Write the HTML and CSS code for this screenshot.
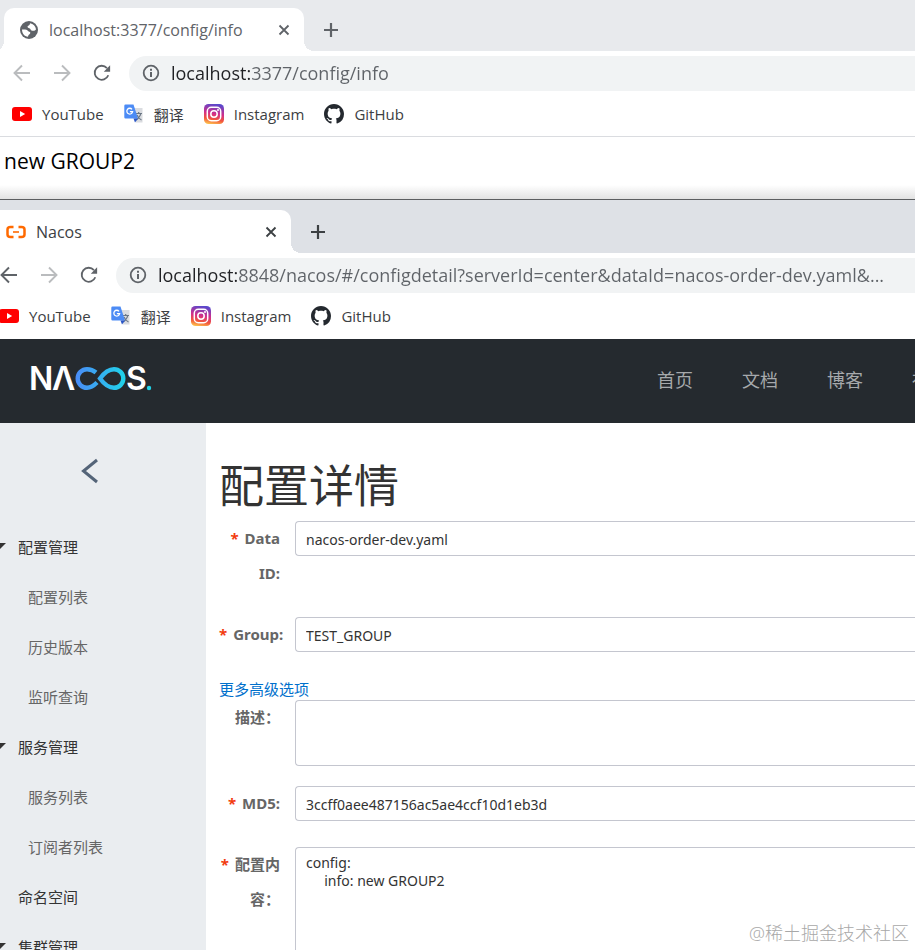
FILE: index.html
```
<!DOCTYPE html>
<html lang="zh-CN">
<head>
  <meta charset="UTF-8" />
  <meta name="viewport" content="width=device-width, initial-scale=1.0"/>
  <title>Nacos</title>
  <link rel="stylesheet" href="styles.css">
</head>
<body>
  <!-- 公用图标 -->
  <svg class="sprite" aria-hidden="true">
    <defs>
      <linearGradient id="igBlue" x1="0.5" y1="0" x2="0.3" y2="1">
        <stop offset="0" stop-color="#5a48cc"/>
        <stop offset="0.45" stop-color="#d02e8c"/>
        <stop offset="0.75" stop-color="#f2553c"/>
        <stop offset="1" stop-color="#fdc04d"/>
      </linearGradient>
    </defs>
    <symbol id="close" viewBox="0 0 12 12">
      <path d="M1.5 1.5l9 9M10.5 1.5l-9 9" fill="none" stroke="currentColor" stroke-width="1.8"/>
    </symbol>
    <symbol id="plus" viewBox="0 0 16 16">
      <path d="M8 1v14M1 8h14" fill="none" stroke="currentColor" stroke-width="2.2"/>
    </symbol>
    <symbol id="back" viewBox="0 0 18 18">
      <path d="M17 9H2M9 1.5L1.5 9 9 16.5" fill="none" stroke="currentColor" stroke-width="1.9"/>
    </symbol>
    <symbol id="forward" viewBox="0 0 18 18">
      <path d="M1 9h15M9 1.5L16.5 9 9 16.5" fill="none" stroke="currentColor" stroke-width="1.9"/>
    </symbol>
    <symbol id="reload" viewBox="0 0 20 20">
      <path d="M17 12.500A7.800 7.800 0 1 1 15.500 4.500" fill="none" stroke="currentColor" stroke-width="2"/>
      <path d="M19 1.500v7h-7z" fill="currentColor"/>
    </symbol>
    <symbol id="info" viewBox="0 0 18 18">
      <circle cx="9" cy="9" r="7.3" fill="none" stroke="currentColor" stroke-width="1.8"/>
      <path d="M9 8v5M9 4.8v2" stroke="currentColor" stroke-width="2"/>
    </symbol>
    <symbol id="youtube" viewBox="0 0 20 20">
      <rect x="0" y="3" width="20" height="14" rx="3" fill="#f00"/>
      <path d="M8 7l5.200 3L8 13z" fill="#fff"/>
    </symbol>
    <symbol id="translate" viewBox="0 0 20 20">
      <path d="M8 4h10.500v14.500H12z" fill="#dadce0"/>
      <path d="M11.500 9.500h6.500M14.700 8v1.500M16.800 9.500c-.5 3-2.500 5-4.500 6.500M13 11c1 2.500 2.500 4 4.500 5" fill="none" stroke="#6b7785" stroke-width="1.2"/>
      <path d="M1.500 0.500h8l4.500 14H1.500a1.200 1.200 0 0 1-1.200-1.200V1.700a1.200 1.200 0 0 1 1.200-1.200z" fill="#4c8bf5"/>
      <path d="M9.500 14.500H14l-3 4z" fill="#2a56c6"/>
      <path d="M8 5.300A2.900 2.900 0 1 0 8.600 7.700H5.900" fill="none" stroke="#fff" stroke-width="1.3"/>
    </symbol>
    <symbol id="instagram" viewBox="0 0 20 20">
      <rect width="20" height="20" rx="4.5" fill="url(#igBlue)"/>
      <rect x="3.3" y="3.3" width="13.4" height="13.4" rx="4" fill="none" stroke="#fff" stroke-width="1.5"/>
      <circle cx="10" cy="10" r="3.2" fill="none" stroke="#fff" stroke-width="1.5"/>
      <circle cx="14" cy="6" r="1" fill="#fff"/>
    </symbol>
    <symbol id="github" viewBox="0 0 16 16">
      <path fill="#24292f" d="M8 0C3.580 0 0 3.580 0 8c0 3.540 2.290 6.530 5.470 7.590.4.070.55-.17.55-.38 0-.19-.01-.82-.01-1.490-2.010.37-2.530-.49-2.690-.94-.09-.23-.48-.94-.82-1.130-.28-.15-.68-.52-.01-.53.63-.01 1.080.58 1.230.82.72 1.210 1.870.87 2.330.66.07-.52.28-.87.51-1.070-1.780-.2-3.640-.89-3.640-3.950 0-.87.31-1.590.82-2.150-.08-.2-.36-1.020.08-2.120 0 0 .67-.21 2.200.82.64-.18 1.320-.27 2-.27s1.360.09 2 .27c1.530-1.040 2.200-.82 2.200-.82.44 1.100.16 1.920.08 2.120.51.56.82 1.270.82 2.150 0 3.070-1.870 3.750-3.650 3.950.29.25.54.73.54 1.480 0 1.070-.01 1.930-.01 2.200 0 .21.15.46.55.38A8.010 8.010 0 0 0 16 8c0-4.420-3.580-8-8-8z"/>
    </symbol>
  </svg>

  <!-- 后面的浏览器窗口 -->
  <section class="window window-back">
    <div class="tab-strip">
      <div class="tab">
        <svg class="favicon" viewBox="0 0 18 18">
          <circle cx="9" cy="9" r="9" fill="#5f6368"/>
          <path d="M2 8.500c2.500-.3 5 0 5.500 1 .8 1.500 2.800.8 2.800 2.200 0 1.600-2 1.400-2.300 4.100C4.500 15.500 2 12.500 2 8.500zM10 2.200c3.300.5 5.500 2.800 6 6-.8 1.800-3 2-4.500 1.300-1.200-.6-.7-1.800-2.200-2.200-2-.5-2.300-1.800-1-2.500C9.500 4.200 10 3.500 10 2.200z" fill="#fff"/>
        </svg>
        <span class="tab-title">localhost:3377/config/info</span>
        <button class="tab-close" aria-label="关闭"><svg><use href="#close"/></svg></button>
      </div>
      <button class="new-tab" aria-label="新标签页"><svg><use href="#plus"/></svg></button>
    </div>
    <div class="toolbar">
      <button class="nav-btn disabled" aria-label="后退"><svg><use href="#back"/></svg></button>
      <button class="nav-btn disabled" aria-label="前进"><svg><use href="#forward"/></svg></button>
      <button class="nav-btn" aria-label="重新加载"><svg><use href="#reload"/></svg></button>
      <div class="omnibox">
        <svg><use href="#info"/></svg>
        <input type="text" aria-label="地址" value="localhost:3377/config/info">
      </div>
    </div>
    <nav class="bookmarks">
      <a href="#"><svg><use href="#youtube"/></svg>YouTube</a>
      <a href="#"><svg><use href="#translate"/></svg>翻译</a>
      <a href="#"><svg><use href="#instagram"/></svg>Instagram</a>
      <a href="#"><svg><use href="#github"/></svg>GitHub</a>
    </nav>
    <div class="plain-page">new GROUP2</div>
  </section>

  <!-- 前面的浏览器窗口 -->
  <section class="window window-front">
    <div class="chrome">
      <div class="tab-strip">
        <div class="tab">
          <svg class="favicon" viewBox="0 0 20 18">
            <path d="M7.500 4H4.500C2.500 4 1.500 5 1.500 6.500v5C1.500 13 2.500 14 4.500 14h3M12.500 4h3c2 0 3 1 3 2.500v5c0 1.500-1 2.500-3 2.500h-3" fill="none" stroke="#ff6a00" stroke-width="2.5"/>
            <path d="M7 9h6" stroke="#ff6a00" stroke-width="1.6"/>
          </svg>
          <span class="tab-title">Nacos</span>
          <button class="tab-close" aria-label="关闭"><svg><use href="#close"/></svg></button>
        </div>
        <button class="new-tab" aria-label="新标签页"><svg><use href="#plus"/></svg></button>
      </div>
      <div class="toolbar">
        <button class="nav-btn" aria-label="后退"><svg><use href="#back"/></svg></button>
        <button class="nav-btn disabled" aria-label="前进"><svg><use href="#forward"/></svg></button>
        <button class="nav-btn" aria-label="重新加载"><svg><use href="#reload"/></svg></button>
        <div class="omnibox">
          <svg><use href="#info"/></svg>
          <input type="text" aria-label="地址" value="localhost:8848/nacos/#/configdetail?serverId=center&amp;dataId=nacos-order-dev.yaml&amp;...">
        </div>
      </div>
      <nav class="bookmarks">
        <a href="#"><svg><use href="#youtube"/></svg>YouTube</a>
        <a href="#"><svg><use href="#translate"/></svg>翻译</a>
        <a href="#"><svg><use href="#instagram"/></svg>Instagram</a>
        <a href="#"><svg><use href="#github"/></svg>GitHub</a>
      </nav>
    </div>

    <header class="header">
      <a href="#" class="logo" aria-label="Nacos">
        <svg viewBox="0 0 124 48">
          <defs>
            <linearGradient id="loop" gradientUnits="userSpaceOnUse" x1="46" y1="0" x2="96" y2="0">
              <stop offset="0" stop-color="#4a8cf7"/>
              <stop offset="1" stop-color="#1fd5ea"/>
            </linearGradient>
          </defs>
          <text x="-1" y="35" class="logo-text">N</text>
          <text x="22" y="35" class="logo-text">Λ</text>
          <path d="M66 17.500C63 15 60.500 14.200 57 14.200A9.300 9.300 0 0 0 57 32.800C61 32.800 64 30.500 67 27.500" fill="none" stroke="url(#loop)" stroke-width="4.4"/>
          <path d="M70 23.500C74 18 78 14.200 84 14.200A9.300 9.300 0 0 1 84 32.800C78 32.800 74 29 70 23.500z" fill="none" stroke="url(#loop)" stroke-width="4.4"/>
          <text x="96" y="35" class="logo-text">S</text>
          <circle cx="119" cy="33" r="2.2" fill="#1fd5ea"/>
        </svg>
      </a>
      <nav class="site-nav">
        <a href="#">首页</a>
        <a href="#">文档</a>
        <a href="#">博客</a>
        <a href="#">社区</a>
      </nav>
    </header>

    <div class="body">
      <aside class="sidebar">
        <button class="back-btn" aria-label="返回">
          <svg viewBox="0 0 18 26"><path d="M16 2L2.500 13 16 24" fill="none" stroke="#546478" stroke-width="3"/></svg>
        </button>
        <ul class="menu">
          <li class="group open"><a href="#">配置管理</a></li>
          <li><a href="#">配置列表</a></li>
          <li><a href="#">历史版本</a></li>
          <li><a href="#">监听查询</a></li>
          <li class="group open"><a href="#">服务管理</a></li>
          <li><a href="#">服务列表</a></li>
          <li><a href="#">订阅者列表</a></li>
          <li class="group"><a href="#">命名空间</a></li>
          <li class="group open"><a href="#">集群管理</a></li>
        </ul>
      </aside>

      <main class="main">
        <h1>配置详情</h1>
        <form>
          <div class="row">
            <label for="dataId" class="required">Data ID:</label>
            <input type="text" id="dataId" value="nacos-order-dev.yaml">
          </div>
          <div class="row">
            <label for="group" class="required">Group:</label>
            <input type="text" id="group" value="TEST_GROUP">
          </div>
          <a href="#" class="more">更多高级选项</a>
          <div class="row desc">
            <label for="desc">描述：</label>
            <textarea id="desc"></textarea>
          </div>
          <div class="row">
            <label for="md5" class="required">MD5:</label>
            <input type="text" id="md5" value="3ccff0aee487156ac5ae4ccf10d1eb3d">
          </div>
          <div class="row">
            <label for="content" class="required">配置内容：</label>
            <textarea id="content" class="content">config:
     info: new GROUP2</textarea>
          </div>
        </form>
      </main>
    </div>
  </section>

  <div class="watermark">@稀土掘金技术社区</div>
</body>
</html>
```

FILE: styles.css
```
* {
  box-sizing: border-box;
}

body {
  margin: 0;
  height: 100vh;
  overflow: hidden;
  position: relative;
  display: flex;
  flex-direction: column;
  font-family: "Open Sans", "Noto Sans CJK SC", sans-serif;
  background: #fff;
  color: #333;
}

a {
  color: inherit;
  text-decoration: none;
}

button {
  display: flex;
  align-items: center;
  justify-content: center;
  padding: 0;
  border: none;
  background: none;
  color: inherit;
  cursor: pointer;
}

.sprite {
  position: absolute;
  width: 0;
  height: 0;
}

/* 浏览器外框 */
.tab-strip {
  display: flex;
  align-items: flex-end;
  height: 51px;
  padding-left: 4px;
  background: #e8eaed;
}

.tab {
  position: relative;
  display: flex;
  align-items: center;
  width: 300px;
  height: 43px;
  padding: 0 14px 0 16px;
  border-radius: 10px 10px 0 0;
  background: #fff;
  color: #5f6368;
}

/* 标签页底部的圆角 */
.tab::before,
.tab::after {
  content: "";
  position: absolute;
  bottom: 0;
  width: 10px;
  height: 10px;
}

.tab::before {
  right: 100%;
  background: radial-gradient(circle at 0 0, transparent 10px, #fff 10px);
}

.tab::after {
  left: 100%;
  background: radial-gradient(circle at 100% 0, transparent 10px, #fff 10px);
}

.favicon {
  width: 18px;
  height: 18px;
}

.tab-title {
  flex: 1;
  margin-left: 11px;
  font-size: 16px;
}

.tab-close svg {
  width: 12px;
  height: 12px;
}

.new-tab {
  width: 54px;
  height: 43px;
  color: #5f6368;
}

.new-tab svg {
  width: 16px;
  height: 16px;
}

.toolbar {
  display: flex;
  align-items: center;
  height: 44px;
  padding-left: 12px;
  background: #fff;
}

.nav-btn {
  width: 20px;
  height: 36px;
  margin-right: 20px;
  color: #5f6368;
}

.nav-btn svg {
  width: 18px;
  height: 18px;
}

.nav-btn.disabled {
  color: #babcbe;
}

.omnibox {
  display: flex;
  flex: 1;
  align-items: center;
  height: 35px;
  margin-left: -3px;
  padding-left: 13px;
  border-radius: 18px 0 0 18px;
  background: #f1f3f4;
  color: #5f6368;
}

.omnibox svg {
  width: 18px;
  height: 18px;
}

/* 主机名深色，其余灰色 */
.omnibox input {
  flex: 1;
  min-width: 0;
  margin-left: 11px;
  padding: 0;
  border: none;
  outline: none;
  font-family: inherit;
  font-size: 18px;
  background: linear-gradient(90deg, #202124 80px, #5f6368 80px);
  -webkit-background-clip: text;
  background-clip: text;
  color: transparent;
}

.bookmarks {
  display: flex;
  align-items: center;
  gap: 20px;
  height: 41px;
  padding: 0 12px 3px;
  background: #fff;
  color: #3c4043;
  font-size: 15px;
}

.bookmarks a {
  display: flex;
  align-items: center;
  gap: 10px;
}

.bookmarks svg {
  width: 20px;
  height: 20px;
}

.plain-page {
  height: 63px;
  padding: 8px 4px;
  border-top: 1px solid #dadce0;
  background: linear-gradient(#fff 48px, #e2e2e2);
  color: #000;
  font-size: 21px;
  line-height: 32px;
}

.window-front {
  flex: 1;
  min-height: 0;
  display: flex;
  flex-direction: column;
  border-top: 1px solid #5c5e60;
  overflow: hidden;
}

/* 前窗口左边缘超出屏幕 */
.chrome {
  margin-left: -13px;
}

.window-front .tab-strip {
  height: 53px;
  background: #dee1e6;
}

.window-front .tab,
.window-front .new-tab {
  color: #3c4043;
}

.window-front .tab {
  padding-left: 15px;
}

.window-front .favicon {
  width: 20px;
}

.window-front .tab-title {
  margin-left: 10px;
}

.window-front .bookmarks {
  height: 42px;
  padding-bottom: 4px;
}

/* Nacos 顶栏 */
.header {
  display: flex;
  flex: none;
  align-items: center;
  justify-content: space-between;
  height: 84px;
  padding: 0 0 4px 30px;
  background: #252a2f;
}

.logo svg {
  display: block;
  width: 124px;
  height: 48px;
  overflow: visible;
}

.logo-text {
  font-family: Inter, sans-serif;
  font-size: 32px;
  font-weight: 600;
  fill: #fff;
}

.site-nav {
  display: flex;
  gap: 49px;
  margin-right: -33px;
  color: #a6a9ac;
  font-size: 18px;
}

.body {
  display: flex;
  flex: 1;
  min-height: 0;
}

/* 左侧菜单 */
.sidebar {
  flex: none;
  width: 206px;
  background: #eaedf0;
}

.back-btn {
  width: 180px;
  height: 96px;
}

.back-btn svg {
  width: 18px;
  height: 26px;
}

.menu {
  margin: 3px 0 0;
  padding: 0;
  list-style: none;
  font-size: 15px;
}

.menu li {
  height: 50px;
  padding-left: 28px;
  line-height: 50px;
  color: #666;
}

.menu .group {
  display: flex;
  align-items: center;
  padding-left: 18px;
  color: #333;
}

.menu .open {
  padding-left: 0;
}

.menu .open::before {
  content: "";
  width: 18px;
  height: 6px;
  margin-bottom: 2px;
  background: #333;
  clip-path: polygon(0 0, 6px 0, 0 6px);
}

/* 配置表单 */
.main {
  flex: 1;
  min-width: 0;
  padding: 29px 0 0 13px;
  overflow: hidden;
  background: #fff;
  font-family: "Noto Sans", "Noto Sans CJK SC", sans-serif;
  font-size: 15px;
}

h1 {
  margin: 0 0 2px;
  font-size: 45px;
  font-weight: 400;
  line-height: 67px;
}

.row {
  display: flex;
  align-items: flex-start;
  margin-bottom: 26px;
}

.row label {
  flex: none;
  width: 61px;
  margin-right: 15px;
  color: #666;
  font-size: 15px;
  font-weight: 700;
  line-height: 35px;
  text-align: right;
}

.required::before {
  content: "*";
  margin-right: 6px;
  color: #f23c10;
}

.row input,
.row textarea {
  flex: 1;
  min-width: 0;
  height: 35px;
  padding: 2px 10px 0;
  border: 1px solid #c4c6cf;
  border-right: none;
  border-radius: 4px 0 0 4px;
  outline: none;
  background: #fff;
  color: #333;
  font-family: inherit;
  font-size: 14px;
}

.row textarea {
  height: 66px;
  padding: 6px 10px;
  line-height: 18px;
  resize: none;
}

.row .content {
  height: 200px;
}

.more {
  display: block;
  color: #0070cc;
  line-height: 22px;
}

.row.desc {
  margin-bottom: 20px;
}

.watermark {
  position: absolute;
  right: 6px;
  bottom: 4px;
  color: #a8a8a8;
  font-size: 18px;
  font-weight: 300;
  line-height: 26px;
}
```
